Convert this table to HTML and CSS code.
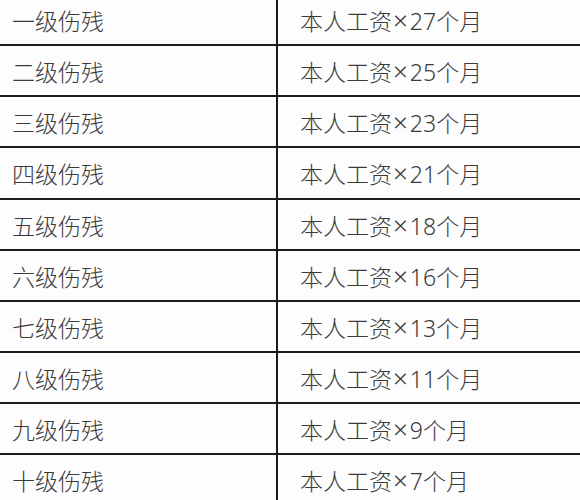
FILE: index.html
```html
<!DOCTYPE html>
<html lang="zh">
<head>
<meta charset="utf-8">
<link rel="stylesheet" href="styles.css">
</head>
<body>
<div class="table">
  <div class="row"><div class="cell left">一级伤残</div><div class="cell right">本人工资<span class="times">×</span>27个月</div></div>
  <div class="row"><div class="cell left">二级伤残</div><div class="cell right">本人工资<span class="times">×</span>25个月</div></div>
  <div class="row"><div class="cell left">三级伤残</div><div class="cell right">本人工资<span class="times">×</span>23个月</div></div>
  <div class="row"><div class="cell left">四级伤残</div><div class="cell right">本人工资<span class="times">×</span>21个月</div></div>
  <div class="row"><div class="cell left">五级伤残</div><div class="cell right">本人工资<span class="times">×</span>18个月</div></div>
  <div class="row"><div class="cell left">六级伤残</div><div class="cell right">本人工资<span class="times">×</span>16个月</div></div>
  <div class="row"><div class="cell left">七级伤残</div><div class="cell right">本人工资<span class="times">×</span>13个月</div></div>
  <div class="row"><div class="cell left">八级伤残</div><div class="cell right">本人工资<span class="times">×</span>11个月</div></div>
  <div class="row"><div class="cell left">九级伤残</div><div class="cell right">本人工资<span class="times">×</span>9个月</div></div>
  <div class="row"><div class="cell left">十级伤残</div><div class="cell right">本人工资<span class="times">×</span>7个月</div></div>
</div>
</body>
</html>
```

FILE: styles.css
```css
html, body {
  margin: 0;
  padding: 0;
  background: #fdfdfd;
  overflow: hidden;
}
body {
  width: 580px;
  height: 500px;
  font-family: "Noto Sans", "Noto Sans CJK SC", sans-serif;
  font-size: 23px;
  font-weight: 300;
  color: #3a3a3a;
}
.table {
  margin-top: -5px;
  display: grid;
  grid-auto-rows: 51.125px;
}
.row {
  display: grid;
  grid-template-columns: 276px 1fr;
  border-bottom: 2px solid #1c1c1c;
  box-sizing: border-box;
}
.cell {
  display: flex;
  align-items: center;
  padding-top: 1px;
}
.left {
  padding-left: 12px;
}
.right {
  border-left: 2px solid #1c1c1c;
  padding-left: 22px;
}
.times {
  font-size: 26px;
  margin: 0 2px 0 1px;
}
```
